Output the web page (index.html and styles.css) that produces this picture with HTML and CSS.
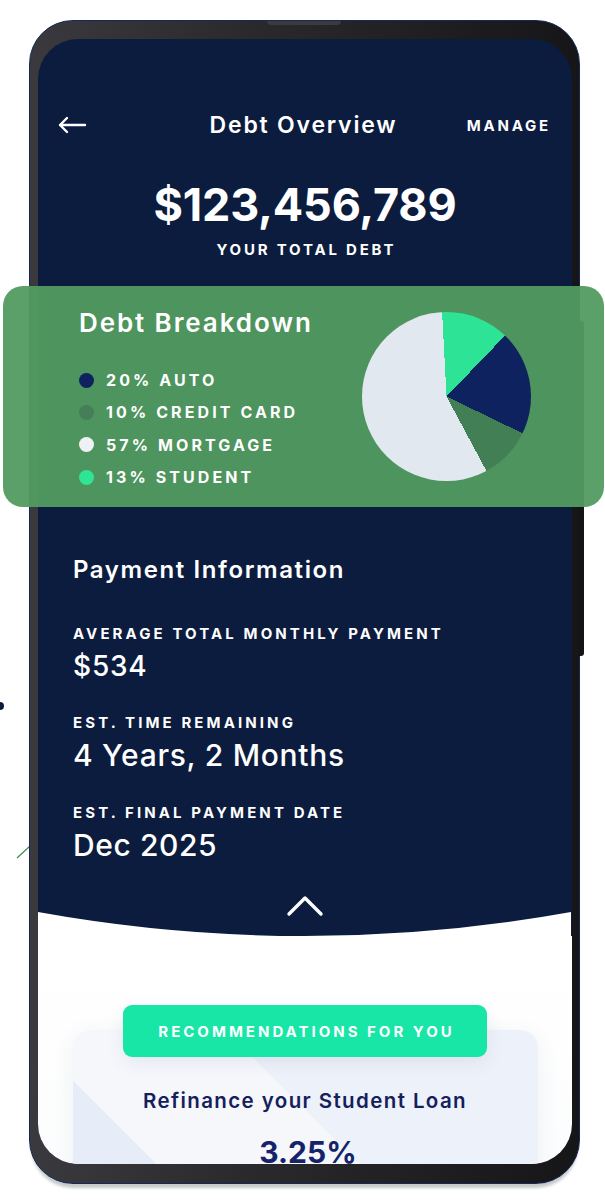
FILE: index.html
```html
<!DOCTYPE html>
<html lang="en">
<head>
<meta charset="utf-8">
<title>Debt Overview</title>
<link rel="stylesheet" href="styles.css">
</head>
<body>
<div class="stage">
  <svg class="strays" width="40" height="220" viewBox="0 0 40 220">
    <circle cx="0" cy="6" r="4" fill="#0c1c3e"/>
    <line x1="17" y1="158" x2="30" y2="146" stroke="#3f8f55" stroke-width="1.2"/>
  </svg>
  <div class="phone">
    <div class="notch"></div>
    <div class="side-btn"></div>
    <div class="screen">
      <div class="top">
        <header class="topbar">
          <svg class="back" width="30" height="18" viewBox="0 0 30 18"><path d="M28 9H3M10 2L3 9l7 7" fill="none" stroke="#fff" stroke-width="2.4" stroke-linecap="round" stroke-linejoin="round"/></svg>
          <h1 class="title">Debt Overview</h1>
          <span class="manage">MANAGE</span>
        </header>
        <div class="total">
          <div class="amount">$123,456,789</div>
          <div class="caption">YOUR TOTAL DEBT</div>
        </div>
        <section class="payment">
          <h2 class="section-title">Payment Information</h2>
          <div class="stat">
            <div class="label">AVERAGE TOTAL MONTHLY PAYMENT</div>
            <div class="value v1">$534</div>
          </div>
          <div class="stat s2">
            <div class="label">EST. TIME REMAINING</div>
            <div class="value v2">4 Years, 2 Months</div>
          </div>
          <div class="stat s3">
            <div class="label">EST. FINAL PAYMENT DATE</div>
            <div class="value v3">Dec 2025</div>
          </div>
        </section>
        <div class="toggle">
          <svg width="38" height="24" viewBox="0 0 38 24"><path d="M3 20L19 4l16 16" fill="none" stroke="#fff" stroke-width="3.4" stroke-linecap="round" stroke-linejoin="round"/></svg>
        </div>
      </div>
      <div class="bottom">
        <svg class="wave" width="533" height="24" viewBox="0 0 533 24" preserveAspectRatio="none"><path d="M0 0Q266.5 48 533 0V24H0Z" fill="#ffffff"/></svg>
        <div class="bottom-content">
          <div class="reco-btn">RECOMMENDATIONS FOR YOU</div>
          <div class="reco-card">
            <div class="reco-title">Refinance your Student Loan</div>
            <div class="rate">3.25%</div>
          </div>
        </div>
      </div>
    </div>
  </div>
  <div class="breakdown">
    <div class="bd-left">
      <h2 class="bd-title">Debt Breakdown</h2>
      <ul class="legend">
        <li><span class="dot auto"></span>20% AUTO</li>
        <li><span class="dot credit"></span>10% CREDIT CARD</li>
        <li><span class="dot mortgage"></span>57% MORTGAGE</li>
        <li><span class="dot student"></span>13% STUDENT</li>
      </ul>
    </div>
    <div class="pie"></div>
  </div>
</div>
</body>
</html>
```
FILE: styles.css
```css
* { box-sizing: border-box; }
html, body { margin: 0; padding: 0; }
body {
  background: #ffffff;
  font-family: "Inter", "Liberation Sans", sans-serif;
  color: #fff;
  width: 605px;
  height: 1200px;
  overflow: hidden;
}
.stage {
  position: relative;
  width: 605px;
  height: 1200px;
  padding-top: 20px;
}
.strays {
  position: absolute;
  left: 0;
  top: 700px;
}
.phone {
  position: relative;
  margin-left: 29px;
  width: 551px;
  height: 1164px;
  border-radius: 44px;
  border: 1px solid #14285a;
  background: linear-gradient(90deg, #3a3a3e 0%, #2a2a2d 40%, #161618 100%);
  padding: 18px 7px 19px 8px;
  box-shadow: 0 6px 3px -2px rgba(150, 158, 160, 0.55);
}
.notch {
  position: absolute;
  left: 237px;
  top: 0;
  width: 74px;
  height: 4px;
  background: #3b3b3e;
  border-radius: 0 0 4px 4px;
}
.side-btn {
  position: absolute;
  left: 548px;
  top: 300px;
  width: 6px;
  height: 335px;
  background: #141416;
  border-radius: 0 3px 3px 0;
}
.screen {
  width: 534px;
  height: 1125px;
  border-radius: 40px;
  overflow: hidden;
  background: #0c1c3e;
}
.top {
  padding-top: 71px;
}
.topbar {
  display: grid;
  grid-template-columns: 1fr auto 1fr;
  align-items: center;
  height: 30px;
  padding: 0 22px 0 19px;
}
.back { display: block; }
.title {
  margin: 0;
  font-size: 23px;
  font-weight: 600;
  line-height: 30px;
  letter-spacing: 1.8px;
  text-align: center;
}
.manage {
  justify-self: end;
  font-size: 15px;
  font-weight: 700;
  letter-spacing: 2.8px;
  margin-right: -1px;
}
.total {
  margin-top: 40px;
  text-align: center;
}
.amount {
  font-size: 45px;
  font-weight: 700;
  line-height: 50px;
  letter-spacing: -0.2px;
}
.caption {
  margin-top: 10px;
  font-size: 15px;
  font-weight: 700;
  line-height: 20px;
  letter-spacing: 2.8px;
  padding-left: 2.8px;
}
.payment {
  margin-top: 295px;
  padding-left: 35px;
}
.section-title {
  margin: 0;
  font-size: 24px;
  font-weight: 600;
  line-height: 30px;
  letter-spacing: 1.6px;
}
.stat { margin-top: 40px; }
.stat.s2 { margin-top: 30px; }
.stat.s3 { margin-top: 31px; }
.label {
  font-size: 15px;
  font-weight: 700;
  line-height: 18px;
  letter-spacing: 3.1px;
}
.value {
  margin-top: 5px;
  font-weight: 500;
  line-height: 36px;
}
.v1 { font-size: 28px; letter-spacing: 0.8px; }
.v2 { font-size: 30px; letter-spacing: 0.7px; }
.v3 { font-size: 30px; letter-spacing: 0.6px; }
.toggle {
  position: relative;
  z-index: 1;
  margin-top: 33px;
  margin-bottom: -6px;
  height: 22px;
  display: flex;
  justify-content: center;
}
.toggle svg { display: block; margin-top: -2px; }
.bottom { background: transparent; }
.wave { display: block; }
.bottom-content {
  background: linear-gradient(180deg, #ffffff 0%, #fbfcfd 100%);
  padding-top: 69px;
  height: 300px;
}
.reco-btn {
  position: relative;
  z-index: 1;
  width: 364px;
  height: 52px;
  margin: 0 auto;
  background: #17e6a7;
  border-radius: 9px;
  display: flex;
  align-items: center;
  justify-content: center;
  font-size: 15px;
  font-weight: 700;
  letter-spacing: 3px;
  padding-left: 3px;
  color: #fff;
  box-shadow: 0 6px 18px rgba(40, 70, 120, 0.08);
}
.reco-card {
  width: 465px;
  height: 200px;
  margin: -27px auto 0;
  border-radius: 18px;
  background: linear-gradient(45deg, #e6edf8 0%, #e6edf8 22.5%, #f5f7fb 22.5%, #f5f7fb 53%, #edf1f9 53%, #edf1f9 100%);
  box-shadow: 0 4px 22px rgba(40, 70, 120, 0.07);
  padding-top: 58px;
  text-align: center;
  color: #14205c;
}
.reco-title {
  font-size: 20.5px;
  font-weight: 600;
  line-height: 26px;
  letter-spacing: 1.4px;
}
.rate {
  margin-top: 18px;
  font-size: 30px;
  font-weight: 700;
  line-height: 40px;
  color: #14236a;
  padding-left: 6px;
}
.breakdown {
  position: absolute;
  left: 3px;
  top: 286px;
  width: 601px;
  height: 221px;
  border-radius: 20px;
  background: rgba(82, 155, 96, 0.95);
  display: flex;
  align-items: flex-start;
  justify-content: space-between;
  padding: 22px 73px 0 76px;
}
.bd-title {
  margin: 0;
  font-size: 26px;
  font-weight: 600;
  line-height: 30px;
  letter-spacing: 1.9px;
}
.legend {
  list-style: none;
  margin: 26px 0 0;
  padding: 0;
}
.legend li {
  display: flex;
  align-items: center;
  height: 32.3px;
  font-size: 16px;
  font-weight: 700;
  letter-spacing: 3.1px;
}
.dot {
  width: 15px;
  height: 15px;
  border-radius: 50%;
  margin-right: 12px;
}
.dot.auto { background: #0e2260; }
.dot.credit { background: #457f57; }
.dot.mortgage { background: #eff1f6; }
.dot.student { background: #2ee596; }
.pie {
  margin-top: 4px;
  width: 169px;
  height: 169px;
  border-radius: 50%;
  background: conic-gradient(from -3deg, #2de396 0 13%, #0e2260 13% 33%, #437f55 33% 43%, #e1e8f0 43% 100%);
}
```
